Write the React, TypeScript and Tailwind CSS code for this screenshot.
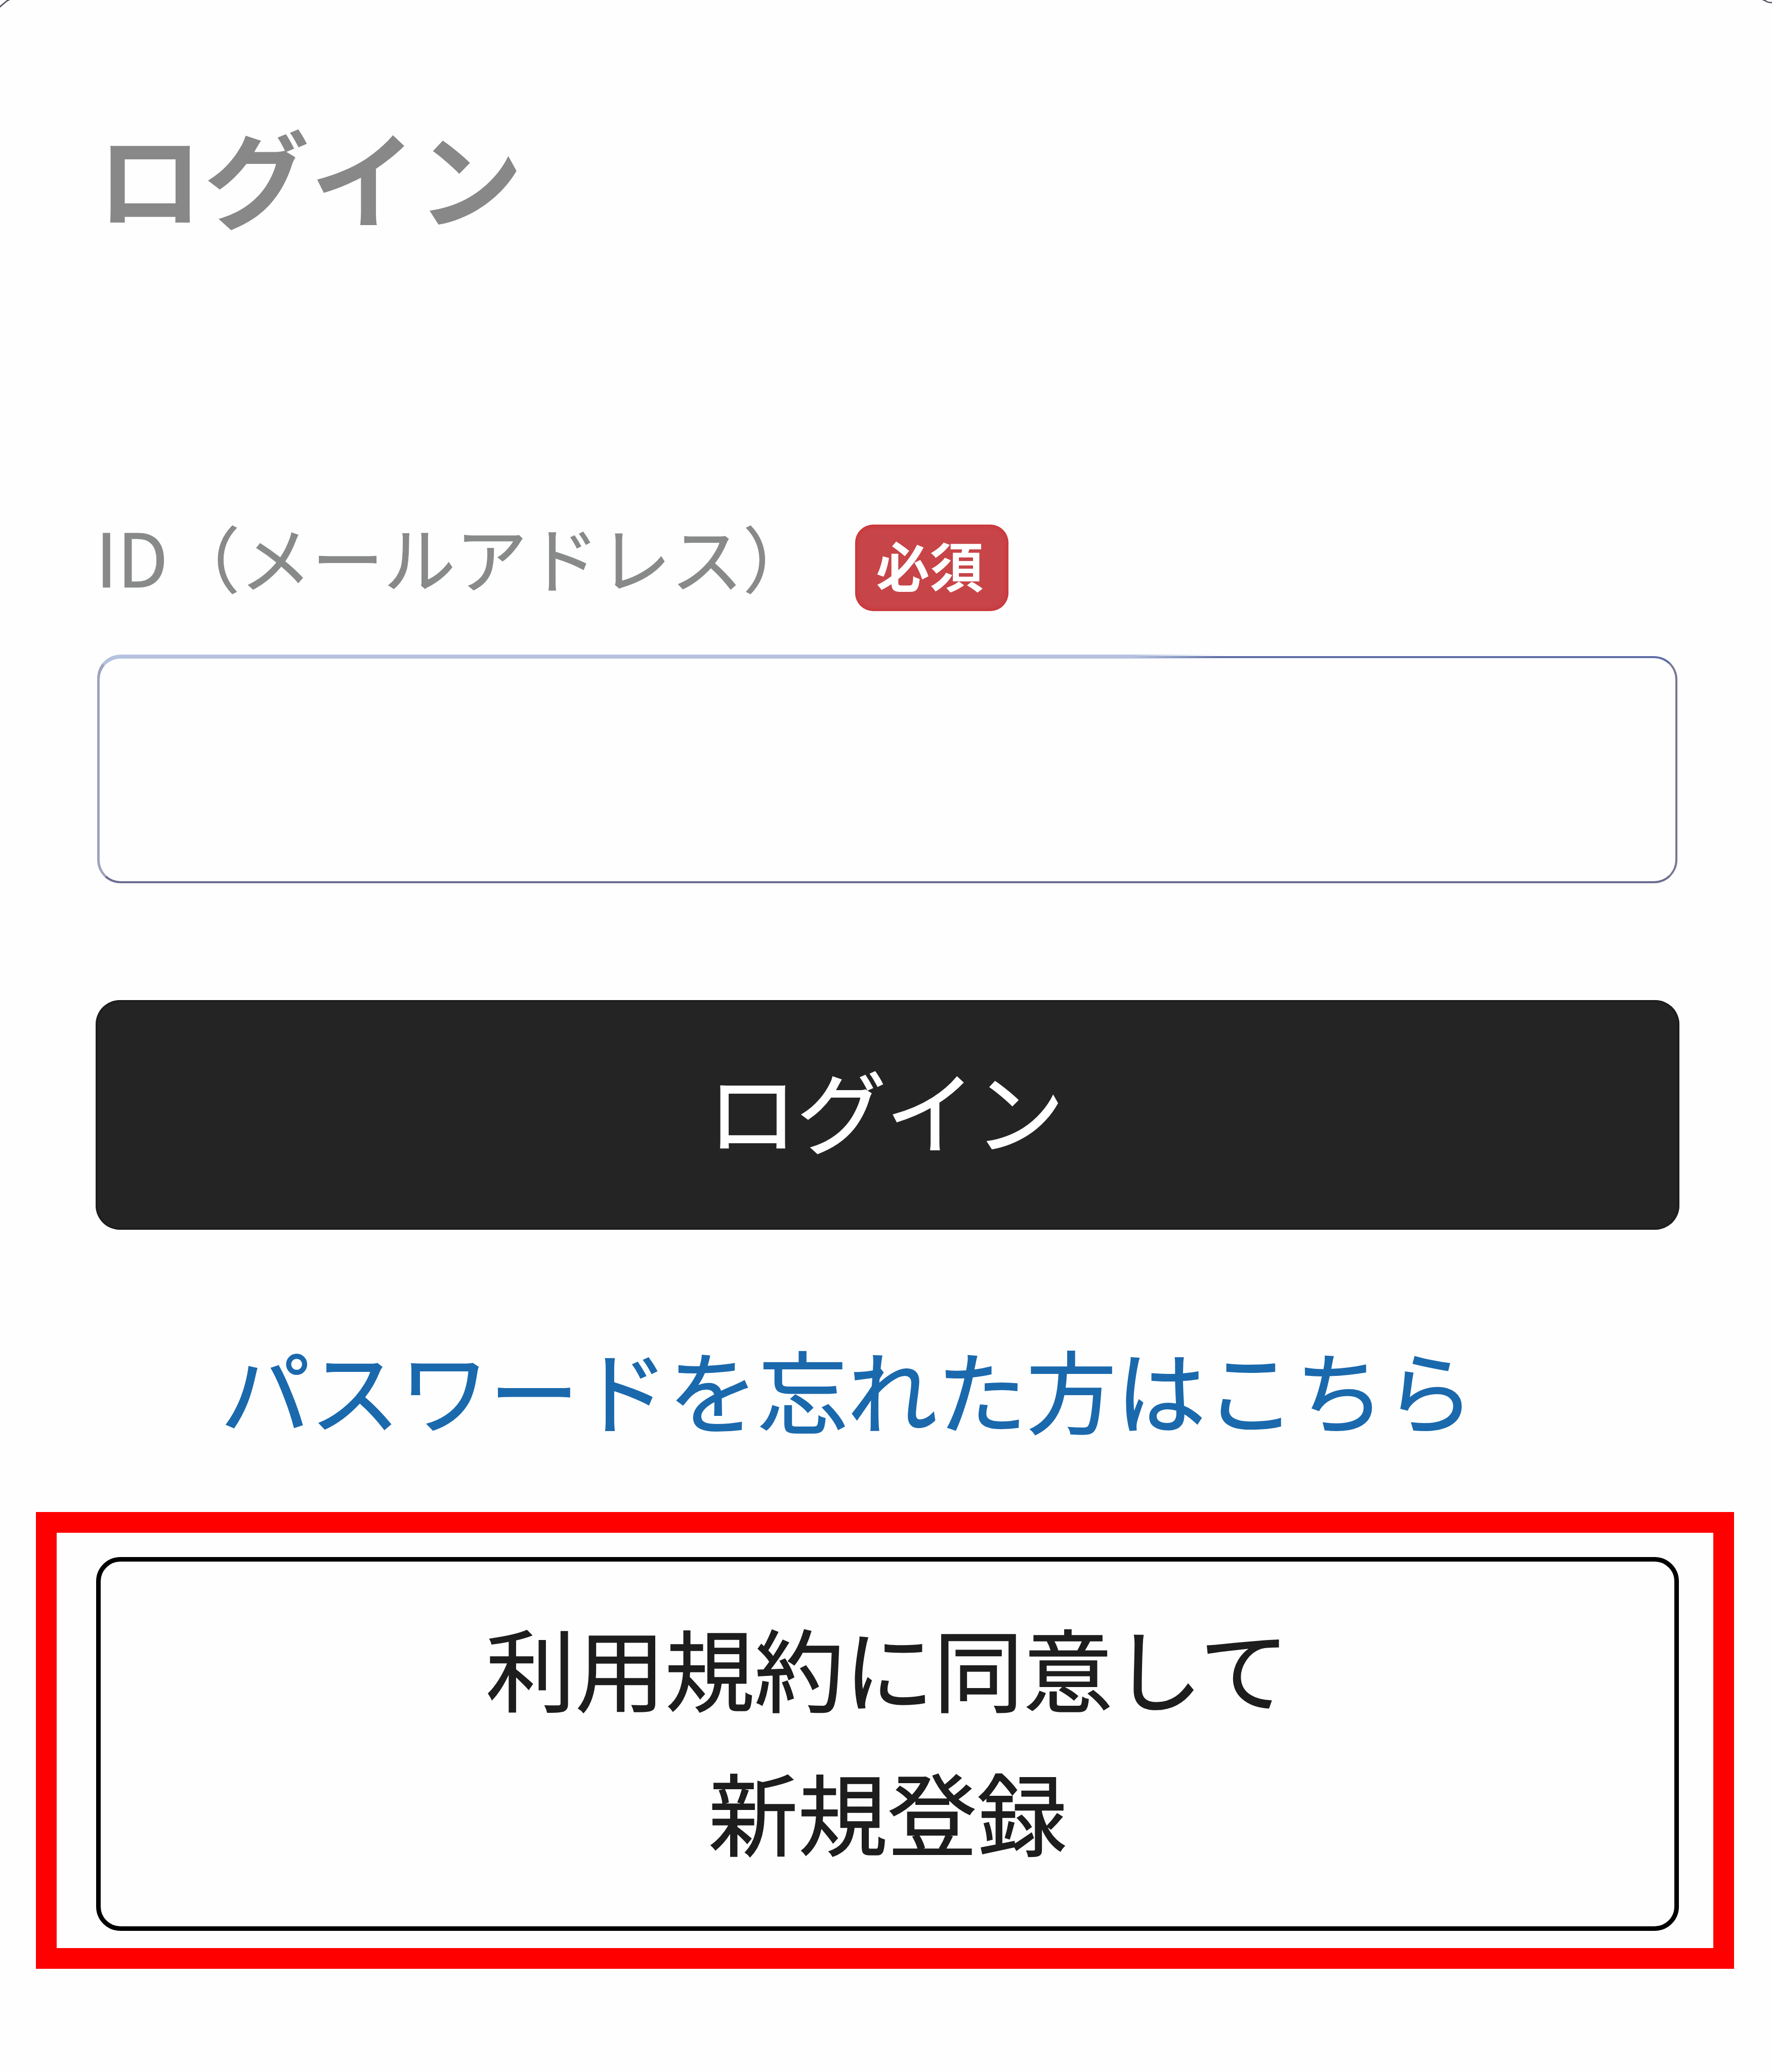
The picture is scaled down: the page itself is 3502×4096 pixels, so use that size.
import { useState } from "react"

/* ---------- Sheet corners ---------- */
function SheetCorners() {
  return (
    <>
      <svg className="absolute left-0 top-0" width="24" height="20" viewBox="0 0 24 20" fill="none">
        <path d="M-2 15.5 L2 11.5 L14 1.5 L19 -1" stroke="#4b4a57" strokeWidth="2.6" />
      </svg>
      <svg className="absolute right-0 top-0" width="24" height="12" viewBox="0 0 24 12" fill="none">
        <path d="M5 -1 L11 1.5 Q16 5 20 5 H26" stroke="#55525e" strokeWidth="2.6" />
      </svg>
    </>
  )
}

/* ---------- ID field ---------- */
function IdField() {
  const [id, setId] = useState("")

  return (
    <div className="mx-[190px] mt-[37px] flex flex-col">
      <div className="flex h-[171px] items-start">
        <label htmlFor="login-id" className="-ml-[1px] whitespace-nowrap text-[142px] leading-[121px] text-[#888a89] [-webkit-text-stroke:1px_#888a89]">
          <span className="text-[146px]">ID</span>（メールアドレス）
        </label>
        <span className="ml-[80px] h-[171px] w-[303px] rounded-[36px] bg-[#c74448] pl-[41px] text-[106px] font-bold leading-[156px] text-white shadow-[inset_0_0_10px_#d0282c]">
          必須
        </span>
      </div>

      <div className="relative ml-[2px] mt-[89px] h-[449px] w-[3123px]">
        <input
          id="login-id"
          type="email"
          value={id}
          onChange={(e) => setId(e.target.value)}
          className="block size-full rounded-[46px] border-4 border-l-[5px] border-b-[#6c6d90] border-l-[#a0a3bf] border-r-[#78768f] border-t-[#5f6ea6] bg-transparent px-12 text-[142px] outline-none"
        />
        {/* Lighter, thicker highlight along the left part of the top edge */}
        <span className="pointer-events-none absolute -top-[3px] left-0 h-[120px] w-[2220px] rounded-tl-[46px] border-l-[5px] border-t-8 border-l-[#a0a3bf] border-t-[#b5c2df] [mask-image:linear-gradient(to_right,#000_92%,transparent)]" />
      </div>
    </div>
  )
}

/* ---------- Main ---------- */
export default function App() {
  return (
    <main className="relative flex h-[4096px] w-[3502px] flex-col overflow-hidden bg-[#fefefe] font-['Noto_Sans_CJK_JP',sans-serif]">
      <SheetCorners />

      <h1 className="ml-[192px] mt-[226px] text-[208px] font-bold leading-[240px] tracking-[3px] text-[#888888]">
        ログイン
      </h1>

      <div className="mt-[534px]">
        <IdField />
      </div>

      <button className="ml-[189px] mt-[231px] h-[454px] w-[3130px] rounded-[48px] bg-[#242424] pb-[26px] pr-[7px] text-[177px] leading-[428px] tracking-[-1px] text-white shadow-[inset_0_0_5px_#0c0c0c] [-webkit-text-stroke:2px_#ffffff]">
        ログイン
      </button>

      <a href="#" className="ml-[436px] mt-[193px] self-start whitespace-nowrap text-[177px] leading-[240px] text-[#1b69ad] [-webkit-text-stroke:2px_#1b69ad]">
        パスワードを忘れた方はこちら
      </a>

      {/* Highlighted sign-up action */}
      <div className="ml-[71px] mt-[125px] h-[903px] w-[3356px] border-[41px] border-[#ff0000] px-[78px] pt-[48px]">
        <button className="flex h-[739px] w-[3128px] flex-col items-center rounded-[48px] border-[9px] border-black pt-[65px] text-[177px] leading-[285px] text-[#1d1d1d] [-webkit-text-stroke:1.5px_#1d1d1d]">
          <span>利用規約に同意して</span>
          <span>新規登録</span>
        </button>
      </div>
    </main>
  )
}
